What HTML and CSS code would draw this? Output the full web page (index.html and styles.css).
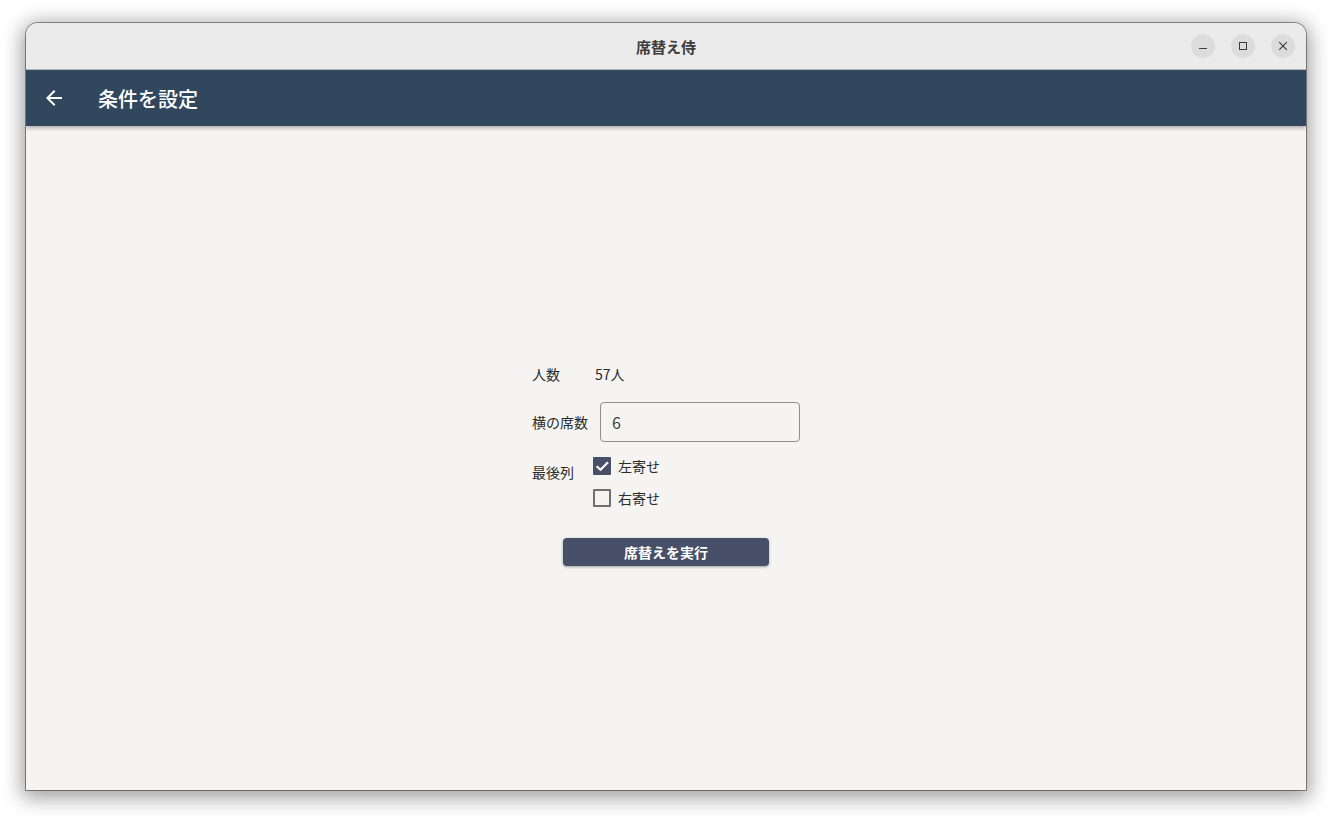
FILE: index.html
```html
<!DOCTYPE html>
<html lang="ja">
<head>
<meta name="viewport" content="width=device-width, initial-scale=1">
<title>席替え侍</title>
<link rel="stylesheet" href="styles.css">
</head>
<body>
<div class="window">
   <!-- Title bar -->
   <div class="titlebar">
      <span class="titlebar-text">席替え侍</span>
      <div class="window-buttons">
         <div class="window-button">
            <svg viewBox="0 0 10 10" width="10" height="10"><path d="M1 7.5 H9" stroke="#3d3d3d" stroke-width="1" fill="none"/></svg>
         </div>
         <div class="window-button">
            <svg viewBox="0 0 10 10" width="10" height="10"><rect x="1.5" y="1.5" width="7" height="7" stroke="#3d3d3d" stroke-width="1" fill="none"/></svg>
         </div>
         <div class="window-button">
            <svg viewBox="0 0 10 10" width="10" height="10"><path d="M1.2 1.2 L8.8 8.8 M8.8 1.2 L1.2 8.8" stroke="#3d3d3d" stroke-width="1.2" fill="none"/></svg>
         </div>
      </div>
   </div>

   <!-- App bar -->
   <div class="appbar">
      <svg class="back-icon" viewBox="0 0 24 24" width="24" height="24"><path d="M20 11H7.83l5.59-5.59L12 4l-8 8 8 8 1.41-1.41L7.83 13H20v-2z" fill="#fff"/></svg>
      <span class="appbar-title">条件を設定</span>
   </div>

   <!-- Form -->
   <div class="content">
      <div class="form">
         <div class="form-row count-row">
            <span class="form-label">人数</span>
            <span class="count-value">57人</span>
         </div>
         <div class="form-row seats-row">
            <span class="form-label">横の席数</span>
            <div class="text-input">6</div>
         </div>
         <div class="form-row align-row">
            <span class="form-label align-label">最後列</span>
            <div class="check-list">
               <div class="check-item">
                  <span class="checkbox checked">
                     <svg viewBox="0 0 18 18" width="18" height="18"><path d="M3.6 9.2 L7.5 12.8 L15 5.2" stroke="#fff" stroke-width="2.2" fill="none"/></svg>
                  </span>
                  <span>左寄せ</span>
               </div>
               <div class="check-item">
                  <span class="checkbox"></span>
                  <span>右寄せ</span>
               </div>
            </div>
         </div>
         <button class="run-button">席替えを実行</button>
      </div>
   </div>
</div>
</body>
</html>
```

FILE: styles.css
```css
html,
body {
   margin: 0;
   padding: 0;
   height: 100%;
   overflow: hidden;
   background: #fff;
   font-family: "Noto Sans CJK JP", "Noto Sans", sans-serif;
   color: #2b2b2b;
}

body {
   padding: 23px 26px 0;
   box-sizing: border-box;
}

.window {
   width: 1280px;
   height: 767px;
   display: flex;
   flex-direction: column;
   background: #f5f4f2;
   border-radius: 12px 12px 0 0;
   overflow: hidden;
   box-shadow:
      0 0 0 1px rgba(0, 0, 0, 0.4),
      0 4px 20px 4px rgba(0, 0, 0, 0.38);
}

.titlebar {
   height: 46px;
   flex: none;
   display: flex;
   align-items: center;
   justify-content: center;
   position: relative;
   background: #ebebeb;
   border-bottom: 1px solid #bdbdbd;
}

.titlebar-text {
   font-size: 15px;
   font-weight: 700;
   color: #3d3d3d;
}

.window-buttons {
   position: absolute;
   top: 11px;
   right: 11px;
   display: flex;
   gap: 16px;
}

.window-button {
   width: 24px;
   height: 24px;
   border-radius: 50%;
   background: #dcdcdc;
   display: flex;
   align-items: center;
   justify-content: center;
}

.appbar {
   height: 56px;
   flex: none;
   display: flex;
   align-items: center;
   padding-left: 16px;
   background: #31475e;
   color: #fff;
   box-shadow: 0 2px 4px rgba(0, 0, 0, 0.3);
   position: relative;
}

.back-icon {
   flex: none;
}

.appbar-title {
   margin-left: 32px;
   font-size: 20px;
   font-weight: 500;
}

.content {
   flex: 1;
   display: flex;
   align-items: center;
   justify-content: center;
   padding-top: 12px;
}

.form {
   width: 268px;
   display: flex;
   flex-direction: column;
   font-size: 14px;
}

.form-row {
   display: flex;
   align-items: center;
}

.form-label {
   flex: none;
}

.count-row {
   height: 22px;
   margin-bottom: 17px;
}

.count-value {
   margin-left: 35px;
}

.seats-row {
   margin-bottom: 14px;
}

.text-input {
   margin-left: 12px;
   width: 200px;
   height: 40px;
   box-sizing: border-box;
   border: 1px solid #8f8f8f;
   border-radius: 4px;
   padding-left: 11px;
   display: flex;
   align-items: center;
   font-size: 16px;
   color: #3d3d3d;
}

.align-row {
   align-items: flex-start;
}

.align-label {
   margin-top: 6px;
}

.check-list {
   margin-left: 19px;
   display: flex;
   flex-direction: column;
   gap: 12px;
}

.check-item {
   height: 20px;
   display: flex;
   align-items: center;
   gap: 7px;
}

.checkbox {
   width: 18px;
   height: 18px;
   box-sizing: border-box;
   border: 2px solid #6f6f6f;
   border-radius: 1px;
   display: block;
}

.checkbox.checked {
   border: 0;
   background: #484f68;
}

.run-button {
   align-self: center;
   margin-top: 30px;
   width: 206px;
   height: 28px;
   padding: 0;
   border: 0;
   border-radius: 4px;
   background: #484f68;
   color: #fff;
   font-family: inherit;
   font-size: 14px;
   font-weight: 700;
   box-shadow: 0 1px 3px rgba(0, 0, 0, 0.35);
}
```
